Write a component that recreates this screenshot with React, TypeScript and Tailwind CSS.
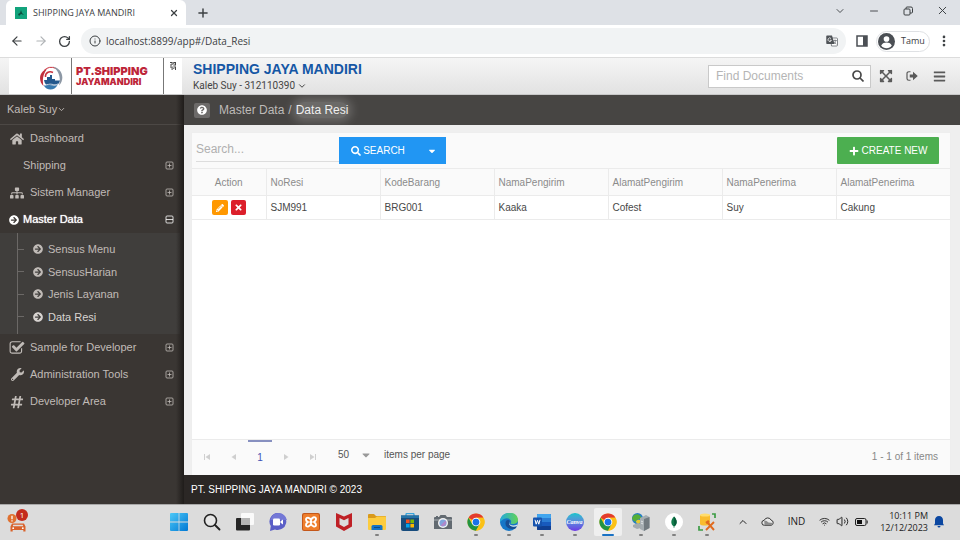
import React, { useState } from 'react';
import {
  FaHome, FaSitemap, FaArrowCircleRight, FaWrench, FaHashtag, FaSearch, FaPlus, FaTimes,
  FaPencilAlt, FaCaretDown, FaQuestionCircle, FaExpandArrowsAlt, FaBars,
} from 'react-icons/fa';
import {
  ArrowLeft, ArrowRight, RotateCw, Info, X, Plus, ChevronDown, ChevronUp, Minus,
  EllipsisVertical, Wifi, Volume2,
} from 'lucide-react';

const CheckSquareIcon = () => (
  <svg viewBox="0 0 1792 1792" className="h-4 w-4" fill="currentColor">
    <path d="M1472 930v318q0 119-84.500 203.500t-203.500 84.500h-832q-119 0-203.500-84.500t-84.500-203.500v-832q0-119 84.500-203.500t203.500-84.500h832q63 0 117 25 15 7 18 23 3 17-9 29l-49 49q-10 10-23 10-3 0-9-2-23-6-45-6h-832q-66 0-113 47t-47 113v832q0 66 47 113t113 47h832q66 0 113-47t47-113v-254q0-13 9-22l64-64q10-10 23-10 6 0 12 3 20 8 20 29zm231-489l-814 814q-24 24-57 24t-57-24l-430-430q-24-24-24-57t24-57l110-110q24-24 57-24t57 24l263 263 647-647q24-24 57-24t57 24l110 110q24 24 24 57t-24 57z" />
  </svg>
);

/* plus / minus box on the right of a menu row */
const ToggleBox = ({ open = false }: { open?: boolean }) => (
  <svg viewBox="0 0 9 9" className="ml-auto h-[9px] w-[9px]" fill="none" stroke="currentColor" strokeWidth=".8">
    <rect x="1" y="1" width="7" height="7" rx="1" />
    <path d={open ? 'M1 4.500h7' : 'M2.500 4.500h4M4.500 2.500v4'} />
  </svg>
);

const SignOutIcon = () => (
  <svg viewBox="0 0 24 24" className="h-3 w-3" fill="none">
    <path d="M9 3.500H5.500A3.500 3.500 0 0 0 2 7v10a3.500 3.500 0 0 0 3.500 3.500H9" stroke="currentColor" strokeWidth="2.400" />
    <path d="M7.500 9H14V3.500L23.500 12 14 20.500V15H7.500z" fill="currentColor" />
  </svg>
);

const ShipLogo = () => (
  <svg viewBox="0 0 24 26" className="h-[26px] w-6" fill="none">
    <path d="M17 3.500A10.500 10.500 0 0 0 5 5.500" stroke="#c9303c" strokeWidth="1" />
    <path d="M8 4C0 6.500-1 16 4.500 21c-1.500-6-.5-12 3.500-17z" fill="#c22f3c" />
    <path d="M14 7.500c-4-2-8 .5-7.500 4.500" stroke="#c9303c" strokeWidth="1.500" />
    <path d="M14 1.500c9 2 12.500 12 6 19 2-7 .5-14-6-19z" fill="#8d98a5" />
    <path d="M5 15h3v-3h3v-2h2v4h3v1.500h5c-1 3-2 4-3.500 5H7.500C6 19 5.500 17 5 15z" fill="#24588c" />
    <path d="M4.500 20c3 1.500 4-.5 7 .3s4 1 7-.3c-3 6-11 6-14 0z" fill="#387aaf" />
    <path d="M5 19c4 1.500 5-.5 8 .3s3 .7 6-.3" stroke="#fff" strokeWidth=".7" />
  </svg>
);

const QrIcon = () => (
  <svg viewBox="0 0 6 8" className="h-2 w-1.5" fill="#444">
    <path d="M0 0h2.600v1H0zM3.300 0H6v1H3.300zM1.600 1h1v2h-1zM3.300 1h1v1h-1zM5 1h1v2.500H5zM0 2.500h2v1H0zM3.300 2.500h1.700v1H3.300zM0 4.500h2.600v1H0zM3.300 4.500H6v1H3.300zM1.600 5.500h1V8h-1zM3.300 6h1v1h-1zM5 5.500h1V8H5z" />
  </svg>
);

const TranslateIcon = () => (
  <svg viewBox="0 0 24 24" className="h-3 w-3">
    <path d="M9 6h12a2 2 0 0 1 2 2v12a2 2 0 0 1-2 2H11z" fill="#fff" stroke="#5f6368" strokeWidth="1.500" />
    <path d="M2 1h10l5 17H2a1.500 1.500 0 0 1-1.500-1.500v-14A1.500 1.500 0 0 1 2 1z" fill="#4f5357" />
    <path d="M10 7a3.500 3.500 0 1 0 .8 3.500H7.500" stroke="#fff" strokeWidth="1.600" fill="none" />
    <path d="M14.500 11h7M18 9v2m2 0c-1 3.500-2.500 5-4 6.500m-.5-5 5 6" stroke="#5f6368" strokeWidth="1.400" fill="none" />
  </svg>
);

const ProfileIcon = () => (
  <svg viewBox="0 0 24 24" className="h-[17px] w-[17px]">
    <circle cx="12" cy="12" r="12" fill="#4b4f54" />
    <circle cx="12" cy="8.500" r="4" fill="#fff" />
    <path d="M4.500 17.500c2-3 4.500-4 7.500-4s5.500 1 7.500 4a9 9 0 0 1-15 0z" fill="#fff" />
  </svg>
);

/* taskbar icons */
const WindowsIcon = () => (
  <svg viewBox="0 0 18 18" className="h-[18px] w-[18px]">
    <defs>
      <linearGradient id="win" x1="0" y1="0" x2="1" y2="1">
        <stop offset="0" stopColor="#4cc8f7" />
        <stop offset="1" stopColor="#0078d4" />
      </linearGradient>
    </defs>
    <path d="M1 0h7.600v8.600H0V1a1 1 0 0 1 1-1zM9.400 0H17a1 1 0 0 1 1 1v7.600H9.400zM0 9.400h8.600V18H1a1 1 0 0 1-1-1zM9.400 9.400H18V17a1 1 0 0 1-1 1H9.400z" fill="url(#win)" />
  </svg>
);

const TaskSearchIcon = () => (
  <svg viewBox="0 0 18 18" className="h-[18px] w-[18px]" fill="none" stroke="#222">
    <circle cx="7.500" cy="7.500" r="6" strokeWidth="1.600" fill="#e6e6e6" />
    <path d="M12 12l4.500 4.500" strokeWidth="1.900" strokeLinecap="round" />
  </svg>
);

const TaskViewIcon = () => (
  <svg viewBox="0 0 18 18" className="h-[18px] w-[18px]">
    <rect x="0" y="5" width="14" height="12.500" rx="1" fill="#262626" />
    <rect x="5" y="0" width="13" height="12" rx="1" fill="#fafafa" />
    <rect x="5" y="5" width="9" height="7" fill="#b5b5b5" />
  </svg>
);

const ChatIcon = () => (
  <svg viewBox="0 0 18 18" className="h-[18px] w-[18px]">
    <path d="M9.500 0A8.500 8.500 0 1 1 6 16.500L1 18l.8-5A8.500 8.500 0 0 1 9.500 0z" fill="#5b5fc7" />
    <path d="M9.500 0a8.500 8.500 0 0 1 8.400 7H1.300A8.500 8.500 0 0 1 9.500 0z" fill="#7478d6" />
    <rect x="4" y="5.500" width="7" height="7" rx="1.300" fill="#fff" />
    <path d="M11.500 8.200 14 6.500v5l-2.500-1.700z" fill="#fff" />
  </svg>
);

const XamppIcon = () => (
  <svg viewBox="0 0 18 18" className="h-[18px] w-[18px]">
    <rect width="18" height="18" rx="2" fill="#c4571a" />
    <rect x="1" y="1" width="16" height="16" rx="1.500" fill="#ee7e2c" />
    <path d="M9 7.300C8 4 4 4 4 6.500S6 8.500 6 9 4 9.500 4 12s4 2 5-1.200c1 3.200 5 3.700 5 1.200s-2-2.500-2-3 2-.5 2-3-4-2.500-5 1.300zM7.500 9h3" fill="none" stroke="#fff" strokeWidth="1.900" />
  </svg>
);

const McAfeeIcon = () => (
  <svg viewBox="0 0 18 18" className="h-[18px] w-[18px]">
    <path d="M1 0l8 3.500L17 0v13.500L9 18l-8-4.500zM4.500 5v6.500L9 14l4.500-2.500V5L9 7.200z" fill="#bf2026" fillRule="evenodd" />
  </svg>
);

const FolderIcon = () => (
  <svg viewBox="0 0 18 18" className="h-[18px] w-[18px]">
    <path d="M0 2a1 1 0 0 1 1-1h5l2 2h9a1 1 0 0 1 1 1v5H0z" fill="#d99a1c" />
    <path d="M0 5h7l2-1.500h8a1 1 0 0 1 1 1V16a1 1 0 0 1-1 1H1a1 1 0 0 1-1-1z" fill="#fccc3f" />
    <path d="M3.500 17v-3.500A1.500 1.500 0 0 1 5 12h8a1.500 1.500 0 0 1 1.500 1.500V17z" fill="#1674c4" />
    <path d="M6 14.500h6" stroke="#0d4c86" />
  </svg>
);

const StoreIcon = () => (
  <svg viewBox="0 0 18 18" className="h-[18px] w-[18px]">
    <path d="M5 4V1.500A1 1 0 0 1 6 .5h6a1 1 0 0 1 1 1V4" stroke="#38a3dc" strokeWidth="1.300" fill="none" />
    <path d="M0 2.500h18V16a2 2 0 0 1-2 2H2a2 2 0 0 1-2-2z" fill="#174c7d" />
    <path d="M0 2.500h18V5H0z" fill="#2473a8" />
    <path d="M5 6.500h3.600v3.600H5z" fill="#f25022" />
    <path d="M9.400 6.500H13v3.600H9.400z" fill="#7fba00" />
    <path d="M5 10.900h3.600v3.600H5z" fill="#00a4ef" />
    <path d="M9.400 10.900H13v3.600H9.400z" fill="#ffb900" />
  </svg>
);

const CameraIcon = () => (
  <svg viewBox="0 0 18 18" className="h-[18px] w-[18px]">
    <path d="M2 3h2v1H2zM5 4l1.500-2h5L13 4h4a1 1 0 0 1 1 1v11H0V5a1 1 0 0 1 1-1z" fill="#626a71" />
    <path d="M0 6h18v2H0z" fill="#858c92" />
    <circle cx="9" cy="10" r="5" fill="#f3f3f3" />
    <circle cx="9" cy="10" r="3.600" fill="#7fa6dd" />
    <path d="M6.500 12.500a3.600 3.600 0 0 0 5-5z" fill="#b087ca" />
  </svg>
);

const ChromeIcon = () => (
  <svg viewBox="0 0 48 48" className="h-[18px] w-[18px]">
    <circle cx="24" cy="24" r="23" fill="#fbc116" />
    <path d="M24 24 4.100 12.500A23 23 0 0 1 43.900 12.500H24z" fill="#e33b2e" />
    <path d="M4.100 12.500A23 23 0 0 0 24 47l10-17.300L24 24 14 29.700z" fill="#229342" />
    <path d="M24 47A23 23 0 0 0 43.900 12.500H24l10 17z" fill="#fbc116" />
    <circle cx="24" cy="24" r="11.500" fill="#fff" />
    <circle cx="24" cy="24" r="9" fill="#1a73e8" />
  </svg>
);

const EdgeIcon = () => (
  <svg viewBox="0 0 18 18" className="h-[18px] w-[18px]">
    <defs>
      <linearGradient id="edge" x1="0" y1="0" x2="1" y2="0">
        <stop offset="0" stopColor="#23a9dd" />
        <stop offset="1" stopColor="#62d356" />
      </linearGradient>
    </defs>
    <circle cx="9" cy="9" r="9" fill="#1576c8" />
    <path d="M0 9C0-3 18-3 18 7c0 3.500-5 5-7.500 3.500C13 7 8 4 4.500 5.800 2 7 1 8 0 9z" fill="url(#edge)" />
    <path d="M6 8c-2 5 2 8 6 8s4-1.500 5-2.500c-2 .8-6 .8-7.500-2.500-.8-2 .5-3 .5-3C9 6.500 7 6.500 6 8z" fill="#174e93" />
    <path d="M9.500 8.500c-1.500 3.500 3 5.500 8 3l-.6 1.500c-4.500 2-9.500-.5-7.400-4.500z" fill="#dfe6ea" />
  </svg>
);

const WordIcon = () => (
  <svg viewBox="0 0 18 18" className="h-[18px] w-[18px]">
    <rect x="4" y="1" width="14" height="16" rx="1" fill="#185abd" />
    <path d="M5 1h12a1 1 0 0 1 1 1v3H4V2a1 1 0 0 1 1-1z" fill="#41a5ee" />
    <path d="M4 5h14v4H4z" fill="#2b7cd3" />
    <path d="M4 13h14v3a1 1 0 0 1-1 1H5a1 1 0 0 1-1-1z" fill="#103f91" />
    <rect x="0" y="4.500" width="9" height="9" rx="1" fill="#1553ae" />
    <path d="M2 6.800 3.200 11.200 4.500 7.300 5.800 11.200 7 6.800" stroke="#fff" fill="none" />
  </svg>
);

const CanvaIcon = () => (
  <span className="flex h-[18px] w-[18px] items-center justify-center rounded-full bg-linear-to-b from-[#00c4cc] to-[#6b33e5] font-['Liberation_Serif',serif] text-[6px] font-bold text-white italic">
    Canva
  </span>
);

const ServerIcon = () => (
  <svg viewBox="0 0 18 18" className="h-[18px] w-[18px]">
    <circle cx="5.500" cy="5.500" r="5.500" fill="#267fc4" />
    <path d="M2 2c4-2 6 0 7 2S5 6 4 8 0 6 0 5z" fill="#55af36" />
    <path d="M4 8c2-2 4-1 5 0l-2 3c-2 0-3-1-3-3z" fill="#e6c832" />
    <path d="M8 5l6-3 3.500 2v11L12 18l-4-2z" fill="#a5adb2" />
    <path d="M12 6l5.500-2v11L12 18z" fill="#717a80" />
    <path d="M1 12l5-2 3 2v3l-4 1-4-2z" fill="#a4abaf" />
    <path d="M9 8l2 1M9 10l2 1" stroke="#e2e6e8" />
  </svg>
);

const MongoIcon = () => (
  <svg viewBox="0 0 18 18" className="h-[18px] w-[18px]">
    <circle cx="9" cy="9" r="9" fill="#fff" />
    <path d="M9 3.500c3.500 3.500 3.500 7.500.3 10V15h-.6v-1.500C5.500 11 5.500 7 9 3.500z" fill="#117b4c" />
    <path d="M9 3.500c3.500 3.500 3.500 7.500.3 10z" fill="#075c39" />
  </svg>
);

const DbToolIcon = () => (
  <svg viewBox="0 0 18 18" className="h-[18px] w-[18px]" fill="none">
    <path d="M2 2v9c0 2 10 2 10 0V2z" fill="#f9bc2e" />
    <ellipse cx="7" cy="2" rx="5" ry="1.600" fill="#ffdc6c" />
    <path d="M14 1h3v4M1 13v4h4" stroke="#3d9c46" strokeWidth="1.700" />
    <path d="M9 9l7 8M16 9l-8 8" stroke="#e06a1e" strokeWidth="1.900" />
    <path d="M8 10l3-2" stroke="#e06a1e" strokeWidth="2.500" />
  </svg>
);

const TrafficIcon = () => (
  <svg viewBox="0 0 22 24" className="h-6 w-[22px]">
    <circle cx="5" cy="7.500" r="4.500" fill="#e0702f" />
    <path d="M5 4.700v3.500M5 9.200v1.200" stroke="#fff" strokeWidth="1.300" />
    <path d="M5 12.500h12l1.500 3v5h-2.200V19H5.700v1.500H3.500v-5z" fill="#d9622b" />
    <path d="M6.300 13.800h9.400l.6 1.500H5.700z" fill="#ddd" />
    <circle cx="6.200" cy="17.200" r=".9" fill="#fff" />
    <circle cx="15.800" cy="17.200" r=".9" fill="#fff" />
  </svg>
);

const OneDriveIcon = () => (
  <svg viewBox="0 0 13 9" className="h-[9px] w-[13px]">
    <path d="M3.500 8.300a2.500 2.500 0 0 1-.3-5 3.800 3.800 0 0 1 7-.1 2.600 2.600 0 0 1-.2 5.100z" fill="#e8e8e8" stroke="#333" />
    <path d="M3.200 3.500c2 0 3 .8 4.300 2l4.500.5a2.600 2.600 0 0 1-2 2.300H3.500z" fill="#8d8d8d" />
  </svg>
);

const BatteryIcon = () => (
  <svg viewBox="0 0 13 8" className="h-2 w-[13px]" fill="none">
    <rect x=".5" y=".5" width="10.500" height="7" rx="1.500" stroke="#222" />
    <rect x="2" y="2" width="5" height="4" fill="#111" />
    <path d="M12.200 2.500v3" stroke="#222" />
  </svg>
);

const BellIcon = () => (
  <svg viewBox="0 0 10 12" className="h-3 w-2.5" fill="#0b47a1">
    <path d="M5 0c2.500 0 4 1.800 4 4v3.500l1 1.700H0l1-1.700V4c0-2.200 1.500-4 4-4zM3.500 10h3a1.500 1.500 0 0 1-3 0z" />
  </svg>
);

const PagerIcon = ({ d }: { d: string }) => (
  <svg viewBox="0 0 8 8" className="h-2 w-2" fill="#cfcfcf">
    <path d={d} />
  </svg>
);

const TASKBAR = [
  { name: 'Start', icon: <WindowsIcon />, open: false },
  { name: 'Search', icon: <TaskSearchIcon />, open: false },
  { name: 'Task view', icon: <TaskViewIcon />, open: false },
  { name: 'Chat', icon: <ChatIcon />, open: false },
  { name: 'XAMPP', icon: <XamppIcon />, open: false },
  { name: 'McAfee', icon: <McAfeeIcon />, open: false },
  { name: 'Explorer', icon: <FolderIcon />, open: true },
  { name: 'Store', icon: <StoreIcon />, open: false },
  { name: 'Camera', icon: <CameraIcon />, open: false },
  { name: 'Chrome', icon: <ChromeIcon />, open: true },
  { name: 'Edge', icon: <EdgeIcon />, open: true },
  { name: 'Word', icon: <WordIcon />, open: true },
  { name: 'Canva', icon: <CanvaIcon />, open: true },
  { name: 'Chrome Guest', icon: <ChromeIcon />, open: true, active: true },
  { name: 'Server', icon: <ServerIcon />, open: true },
  { name: 'MongoDB', icon: <MongoIcon />, open: true },
  { name: 'Database', icon: <DbToolIcon />, open: true },
];

const COLUMNS = ['NoResi', 'KodeBarang', 'NamaPengirim', 'AlamatPengirim', 'NamaPenerima', 'AlamatPenerima'];
const ROWS = [['SJM991', 'BRG001', 'Kaaka', 'Cofest', 'Suy', 'Cakung']];
const SUBMENU = ['Sensus Menu', 'SensusHarian', 'Jenis Layanan', 'Data Resi'];

const MenuRow = ({ icon, label, toggle = true }: { icon?: React.ReactNode; label: string; toggle?: boolean }) => (
  <a href="#" className={`flex h-[27px] items-center pr-2.5 ${icon ? 'pl-[9px]' : 'pl-[23px]'}`}>
    {icon && <span className="mr-[5px] flex w-4 justify-center">{icon}</span>}
    <span>{label}</span>
    {toggle && <ToggleBox />}
  </a>
);

const BrowserChrome = () => (
  <div className="font-['Open_Sans',sans-serif] text-[#3c4043]">
    <div className="flex h-[25px] items-center bg-[#dee1e6]">
      <div className="ml-1.5 flex h-full w-[180px] items-center rounded-t-md bg-white px-[9px]">
        <svg viewBox="0 0 12 12" className="h-3 w-3">
          <rect width="12" height="12" fill="#12a37c" />
          <path d="M3 7l2-1 1-3 1 3 2 2-3-1-2 2z" fill="#0b4c3c" />
        </svg>
        <span className="ml-1.5 text-[9px]">SHIPPING JAYA MANDIRI</span>
        <button aria-label="Close tab" className="ml-auto -mr-0.5"><X size={10} strokeWidth={3} /></button>
      </div>
      <button aria-label="New tab" className="ml-2.5"><Plus size={14} strokeWidth={2.5} /></button>
      <div className="ml-auto flex items-center gap-[22px] pr-[11px] pb-1">
        <button aria-label="Tab search"><ChevronDown size={12} strokeWidth={1.8} /></button>
        <button aria-label="Minimize"><Minus size={12} strokeWidth={1.8} /></button>
        <button aria-label="Restore">
          <svg viewBox="0 0 12 12" className="h-3 w-3" fill="none" stroke="currentColor">
            <rect x="2" y="4" width="6" height="6" rx="1" />
            <path d="M4 4V3a1 1 0 0 1 1-1h4a1.500 1.500 0 0 1 1.500 1.500V7a1 1 0 0 1-1 1H8" />
          </svg>
        </button>
        <button aria-label="Close"><X size={13} strokeWidth={1.8} /></button>
      </div>
    </div>
    <div className="flex h-[33px] items-center border-b border-[#dcdcdc] bg-white pl-2.5">
      <button aria-label="Back"><ArrowLeft size={14} /></button>
      <button aria-label="Forward" className="ml-2.5 text-[#b0b3b6]"><ArrowRight size={14} /></button>
      <button aria-label="Reload" className="ml-2.5"><RotateCw size={13} strokeWidth={2.4} /></button>
      <div className="ml-2.5 flex h-[26px] flex-1 items-center rounded-full bg-[#f1f3f4] px-2">
        <Info size={12} />
        <input
          aria-label="Address"
          defaultValue="localhost:8899/app#/Data_Resi"
          className="ml-[5px] min-w-0 flex-1 bg-transparent text-[10px] outline-none"
        />
        <TranslateIcon />
      </div>
      <svg viewBox="0 0 12 12" className="ml-2.5 h-3 w-3">
        <rect x="1" y="1" width="10" height="10" fill="none" stroke="#4b4f54" strokeWidth="1.500" />
        <path d="M7 1h4v10H7z" fill="#4b4f54" />
      </svg>
      <button className="ml-2 flex h-[21px] w-[54px] items-center gap-1.5 rounded-full border border-[#dfe1e4] pl-px text-[9px]">
        <ProfileIcon />
        Tamu
      </button>
      <button aria-label="Menu" className="mr-[9px] ml-[7px]"><EllipsisVertical size={14} strokeWidth={2.6} /></button>
    </div>
  </div>
);

const Header = () => (
  <header className="flex h-[37px] items-center border-b border-[#c8c8c8] bg-linear-to-b from-[#f5f5f5] to-[#e2e2e2]">
    <div className="ml-[9px] flex h-full w-[173px] bg-white">
      <div className="flex w-[63px] items-center justify-end border-r border-[#777] pt-1 pr-2">
        <ShipLogo />
      </div>
      <div className="flex w-[92px] flex-col justify-center border-r border-[#777] pl-1 font-['Inter',sans-serif] font-black text-[#bd2539]">
        <span className="text-[11px] leading-3">PT.SHIPPING</span>
        <span className="text-[9px] leading-[10px]">JAYAMANDIRI</span>
      </div>
      <div className="pt-1 pl-1.5"><QrIcon /></div>
    </div>
    <div className="ml-[11px] pt-1">
      <h1 className="text-sm leading-4 font-bold text-[#1557a5]">SHIPPING JAYA MANDIRI</h1>
      <button className="flex items-center gap-0.5 font-['Roboto',sans-serif] text-[10px] leading-[18px] text-[#444]">
        Kaleb Suy - 312110390 <ChevronDown size={10} strokeWidth={2.4} />
      </button>
    </div>
    <div className="ml-auto flex items-center pr-3.5 text-[#5a5a5a]">
      <div className="flex h-[23px] w-[163px] items-center border border-[#c9c9c9] bg-white pr-1.5 pl-[7px]">
        <input
          aria-label="Find Documents"
          placeholder="Find Documents"
          className="min-w-0 flex-1 text-xs outline-none placeholder:text-[#b5b5b5]"
        />
        <button aria-label="Find" className="pl-1">
          <svg viewBox="0 0 12 12" className="h-3 w-3" fill="none" stroke="#484848" strokeWidth="1.700">
            <circle cx="5" cy="5" r="4" />
            <path d="M8 8l3.500 3.500" />
          </svg>
        </button>
      </div>
      <button aria-label="Full screen" className="ml-2"><FaExpandArrowsAlt size={14} /></button>
      <button aria-label="Sign out" className="ml-[13px]"><SignOutIcon /></button>
      <button aria-label="Toggle menu" className="ml-[15px]"><FaBars size={13} /></button>
    </div>
  </header>
);

const Sidebar = ({ open, onToggle }: { open: boolean; onToggle: () => void }) => (
  <nav className="relative w-[184px] shrink-0 bg-[#3a3633] text-[11px] text-[#c0bbb7]">
    <button className="flex h-[29px] w-full items-center pl-[7px]">
      Kaleb Suy <ChevronDown size={9} strokeWidth={2.4} />
    </button>
    <div className="border-t border-[#4c4845]">
      <MenuRow icon={<FaHome size={14} />} label="Dashboard" toggle={false} />
      <MenuRow label="Shipping" />
      <MenuRow icon={<FaSitemap size={14} />} label="Sistem Manager" />
      <button onClick={onToggle} className="flex h-[27px] w-full items-center gap-1 pr-2.5 pl-[9px] text-white text-shadow-[0_0_1px_#ffffff]">
        <FaArrowCircleRight size={10} />
        Master Data
        <ToggleBox open={open} />
      </button>
      {open && (
        <div className="mr-1 bg-[#403e3c] pl-[17px]">
          <div className="border-l border-[#6b6866] pt-[5px] pb-1.5">
            <ul className="grid h-[90px] grid-rows-4">
              {SUBMENU.map((item) => (
                <li key={item} className="flex items-center">
                  <span className="w-1.5 border-t border-[#6b6866]" />
                  <a href="#" className={`ml-[9px] flex items-center gap-[5px] ${item === 'Data Resi' ? 'text-[#d8d4d1]' : ''}`}>
                    <FaArrowCircleRight size={10} />
                    {item}
                  </a>
                </li>
              ))}
            </ul>
          </div>
        </div>
      )}
      <MenuRow icon={<CheckSquareIcon />} label="Sample for Developer" />
      <MenuRow icon={<FaWrench size={13} />} label="Administration Tools" />
      <MenuRow icon={<FaHashtag size={14} />} label="Developer Area" />
    </div>
    <div className="pointer-events-none absolute inset-y-0 right-0 w-2 bg-linear-to-r from-transparent to-[#1f1c1a]" />
  </nav>
);

const DataGrid = () => (
  <div className="mt-[7px] mr-[9px] ml-[7px] flex flex-1 flex-col border border-b-0 border-[#eeeeee] bg-white text-[10px]">
    <div className="flex h-[35px] items-center bg-[#fafafa] pr-[11px] pl-1">
      <input
        aria-label="Search"
        placeholder="Search..."
        className="h-[22px] w-[143px] border-b border-[#dddddd] pb-0.5 text-xs outline-none placeholder:text-[#b0b0b0]"
      />
      <button className="flex h-[27px] w-[78px] items-center justify-center gap-0.5 bg-[#2196f3] text-white">
        <FaSearch size={10} /> SEARCH
      </button>
      <button aria-label="Search options" className="flex h-[27px] w-[29px] items-center justify-center bg-[#2196f3] text-white">
        <FaCaretDown size={10} />
      </button>
      <button className="ml-auto flex h-[27px] w-[102px] items-center justify-center gap-[3px] rounded-[1px] bg-[#4caf50] text-white">
        <FaPlus size={10} /> CREATE NEW
      </button>
    </div>
    <table className="w-full table-fixed border-collapse">
      <thead>
        <tr className="h-[27px] border-y border-[#ebebeb] bg-[#fafafa] text-[#8b8b8b]">
          <th className="w-[74px] font-normal">Action</th>
          {COLUMNS.map((col) => (
            <th key={col} className="border-l border-[#ebebeb] pl-1 text-left font-normal">{col}</th>
          ))}
        </tr>
      </thead>
      <tbody>
        {ROWS.map((row) => (
          <tr key={row[0]} className="h-6 border-b border-[#ebebeb] text-[#484848]">
            <td>
              <div className="flex justify-center gap-[3px]">
                <button aria-label="Edit" className="flex h-[15px] w-4 items-center justify-center rounded-xs bg-[#ff9800] text-white">
                  <FaPencilAlt size={8} />
                </button>
                <button aria-label="Delete" className="flex h-[15px] w-[15px] items-center justify-center rounded-xs bg-[#dc1f2b] text-white">
                  <FaTimes size={9} />
                </button>
              </div>
            </td>
            {row.map((cell) => (
              <td key={cell} className="border-l border-[#ebebeb] pl-1">{cell}</td>
            ))}
          </tr>
        ))}
      </tbody>
    </table>
    <div className="mt-auto flex h-9 items-center border-t border-[#ebebeb] bg-[#fafafa] pb-0.5 text-[#555]">
      <div className="flex h-full items-center pl-[11px]">
        <button aria-label="First page"><PagerIcon d="M1 1h1v6H1zM7 1v6L2.500 4z" /></button>
        <button aria-label="Previous page" className="ml-[19px]"><PagerIcon d="M6 1v6L1.500 4z" /></button>
        <button className="ml-2.5 flex h-full w-6 items-center justify-center border-t-2 border-[#8790c0] text-[#3f51b5]">1</button>
        <button aria-label="Next page" className="ml-2.5"><PagerIcon d="M2 1v6l4.500-3z" /></button>
        <button aria-label="Last page" className="ml-[19px]"><PagerIcon d="M1 1v6l4.500-3zM6 1h1v6H6z" /></button>
      </div>
      <div className="relative ml-[19px] flex items-center pb-1">
        <select aria-label="Items per page" className="w-9 appearance-none bg-transparent pl-0.5 outline-none">
          <option>50</option>
        </select>
        <FaCaretDown size={12} className="pointer-events-none absolute right-0 text-[#999]" />
      </div>
      <span className="ml-3 pb-1">items per page</span>
      <span className="ml-auto pr-3 text-[#888]">1 - 1 of 1 items</span>
    </div>
  </div>
);

const Taskbar = () => (
  <div className="flex h-9 items-center border-t border-[#a8a8a8] bg-[#dcdcdc] font-['Open_Sans',sans-serif] text-[9px] text-[#222]">
    <div className="w-[162px] pl-[7px]">
      <button aria-label="Traffic" className="relative block">
        <TrafficIcon />
        <span className="absolute -top-0.5 left-[9px] flex h-3 w-3 items-center justify-center rounded-full bg-[#c42b1c] text-[8px] text-white">1</span>
      </button>
    </div>
    {TASKBAR.map((app) => (
      <button
        key={app.name}
        aria-label={app.name}
        className="relative flex h-full w-[33px] items-center justify-center pb-px"
      >
        <span className={`flex h-7 w-7 items-center justify-center rounded-xs ${app.active ? 'bg-[#efefef]' : ''}`}>{app.icon}</span>
        {app.open && (
          <span className={`absolute bottom-1 h-0.5 rounded-full ${app.active ? 'w-3 bg-[#1a72c4]' : 'w-1 bg-[#808080]'}`} />
        )}
      </button>
    ))}
    <div className="ml-auto flex items-center pr-4 pb-0.5">
      <button aria-label="Hidden icons"><ChevronUp size={12} /></button>
      <span className="ml-3"><OneDriveIcon /></span>
      <span className="ml-3.5 text-[10px]">IND</span>
      <Wifi size={11} className="ml-3.5" />
      <Volume2 size={13} strokeWidth={1.8} className="ml-1.5" />
      <span className="ml-1.5"><BatteryIcon /></span>
      <div className="ml-3 text-right leading-3">
        <div>10:11 PM</div>
        <div>12/12/2023</div>
      </div>
      <span className="ml-1.5"><BellIcon /></span>
    </div>
  </div>
);

const App: React.FC = () => {
  const [masterOpen, setMasterOpen] = useState(true);

  return (
    <div className="flex min-h-screen flex-col bg-white font-['Liberation_Sans',Arial,sans-serif]">
      <BrowserChrome />
      <Header />
      <div className="flex flex-1">
        <Sidebar open={masterOpen} onToggle={() => setMasterOpen(!masterOpen)} />
        <main className="flex min-w-0 flex-1 flex-col bg-[#efefef]">
          {/* Breadcrumb */}
          <div className="flex h-[30px] items-center bg-[#474543] pl-2.5 text-xs text-[#bdbab8]">
            <button aria-label="Help" className="mr-[9px] flex h-[15px] w-4 items-center justify-center rounded-xs bg-[#6c6a69] text-white">
              <FaQuestionCircle size={10} />
            </button>
            <a href="#">Master Data</a>
            <span className="px-1">/</span>
            <span className="rounded-full bg-white/20 text-[#efefef] shadow-[0_0_10px_4px_rgba(255,255,255,0.2)]">Data Resi</span>
          </div>
          <DataGrid />
          <footer className="flex h-[29px] items-center bg-[#2b2725] pl-[7px] text-[10px] text-white">
            PT. SHIPPING JAYA MANDIRI © 2023
          </footer>
        </main>
      </div>
      <Taskbar />
    </div>
  );
};

export default App;
